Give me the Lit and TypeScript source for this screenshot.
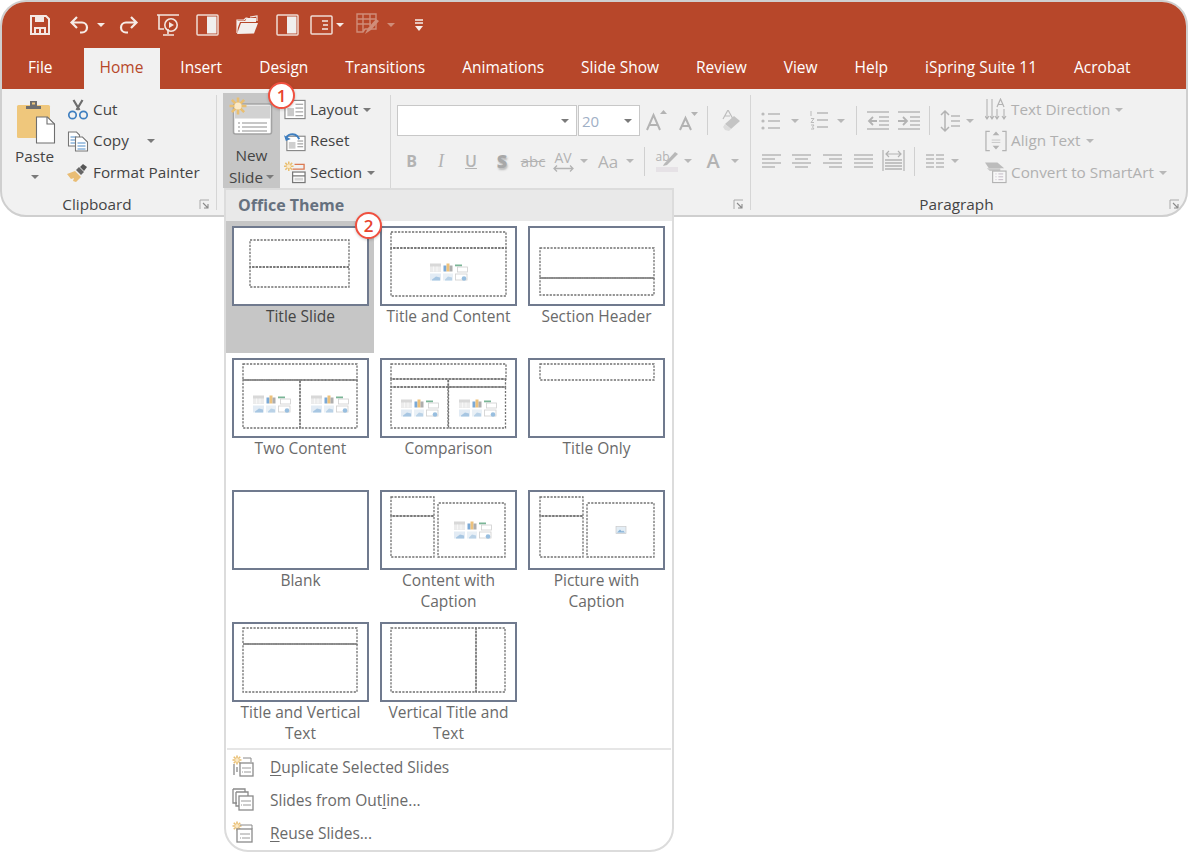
import { LitElement, html, css, svg } from "lit";
import { customElement } from "lit/decorators.js";

const ic = (w: number, h: number, body: unknown) =>
  html`<svg class="ic" width=${w} height=${h} viewBox="0 0 ${w} ${h}" fill="none">${body}</svg>`;

const caret = () => html`<svg class="caret" width="8" height="4" viewBox="0 0 8 4"><path d="M0 0h8L4 4z" fill="currentColor"/></svg>`;

const sun = (cx: number, cy: number, r: number, sw = 1.6) => svg`
  <g stroke="#e9bf72" stroke-width=${sw}>
    <path d="M${cx - r} ${cy}H${cx + r}M${cx} ${cy - r}V${cy + r}M${cx - r * 0.72} ${cy - r * 0.72}L${cx + r * 0.72} ${cy + r * 0.72}M${cx - r * 0.72} ${cy + r * 0.72}L${cx + r * 0.72} ${cy - r * 0.72}"/>
  </g>
  <circle cx=${cx} cy=${cy} r=${r * 0.42} fill="#fbe9c6"/>`;

const I = {
  save: ic(22, 22, svg`<path d="M2 2h15l3 3v15H2z" stroke="#f4e9e4" stroke-width="2"/><path d="M6 2v6h9V2" fill="#f4e9e4"/><path d="M6 20v-6h10v6M11 15v5" stroke="#f4e9e4" stroke-width="2"/>`),
  undo: ic(22, 20, svg`<path d="M8 2L2.500 7.500 8 13M3 7.500h10a5 5 0 0 1 0 10h-2" stroke="#f6ebe6" stroke-width="2.200"/>`),
  redo: ic(22, 20, svg`<path d="M14 2l5.500 5.500L14 13M19 7.500H9a5 5 0 0 0 0 10h2" stroke="#f6ebe6" stroke-width="2.200"/>`),
  present: ic(24, 24, svg`<path d="M1 2h22M3 2v14h5M12 21v-5M7 22h11" stroke="#f4e6e0" stroke-width="1.600"/><circle cx="15" cy="12" r="6.200" stroke="#f4e6e0" stroke-width="1.600"/><path d="M13 9l5 3-5 3z" fill="#f4e6e0"/>`),
  panel: ic(23, 22, svg`<rect x="1" y="1" width="21" height="20" rx="1" stroke="#f0dcd4" stroke-width="1.500"/><rect x="11" y="2.500" width="9.500" height="17" fill="#f0efee"/>`),
  folder: ic(23, 20, svg`<path d="M1 18V5h7l2-2h1v2M14 2l7-1v5" stroke="#f3e8e3" stroke-width="1.200"/><path d="M1 19l4-11h17l-4 10.500z" fill="#f3efed"/><path d="M1 6h8l2-3h9v4H4L1 15z" fill="#f3efed"/>`),
  layoutW: ic(23, 20, svg`<rect x="1" y="1" width="21" height="18" rx="1" stroke="#f0dcd4" stroke-width="1.500"/><path d="M12 6h6M13 10h5M12 14h6" stroke="#f3e8e3" stroke-width="1.300"/>`),
  grid: ic(24, 24, svg`<path d="M1 1h19v15H9l-2 3H1zM1 6h19M1 11h14M7 1v18M14 1v12" stroke="#d08d79" stroke-width="1.400"/><path d="M9 21l3-6 8-9 3 2-8 9z" fill="#d08d79"/>`),
  custom: ic(10, 13, svg`<path d="M1 1h8M1 4h8" stroke="#f7efec" stroke-width="1.400"/><path d="M1 7h8L5 12z" fill="#f7efec"/>`),

  paste: ic(40, 44, svg`
    <rect x="1" y="5" width="33" height="33" rx="1.500" fill="#efc77c"/>
    <path d="M10 6h15v3H10z" fill="#6e6e6e"/><path d="M14 1h7v6h-7z" fill="#6e6e6e"/><rect x="16" y="2.500" width="3" height="2" fill="#efc77c"/>
    <path d="M20.500 17h11l7 7v19h-18z" fill="#fff" stroke="#6e6e6e" stroke-width="1.100"/><path d="M31 17v7h7.500" stroke="#6e6e6e" stroke-width="1.100"/>`),
  cut: ic(21, 21, svg`
    <path d="M6 1l6 10M15 1l-6 10" stroke="#6d6d6d" stroke-width="2.200"/>
    <circle cx="5" cy="16" r="3.700" stroke="#3f7fc0" stroke-width="1.700"/><circle cx="16" cy="16" r="3.700" stroke="#3f7fc0" stroke-width="1.700"/>`),
  copy: ic(21, 21, svg`
    <path d="M1 1h8l3 3v11H1z" fill="#fff" stroke="#777" stroke-width="1.100"/>
    <path d="M3 6h6M3 9h5M3 12h5" stroke="#4f8cc8"/>
    <path d="M8 6h7l5 5v9H8z" fill="#fff" stroke="#777" stroke-width="1.100"/>
    <path d="M10 12h8M10 15h8M10 18h8" stroke="#4f8cc8"/>`),
  painter: ic(22, 20, svg`
    <path d="M0 11l8-3 6 6-5 5-3-1 1-3-3 1z" fill="#e9bd75"/>
    <path d="M9 7l3-3 5 5-3 3z" fill="#666"/><path d="M13 4l3-3 4 3-3 4z" fill="#555"/>`),

  newSlide: ic(46, 42, svg`
    <rect x="4.500" y="10" width="38" height="30" rx="2" fill="#fff" stroke="#a3a3a3" stroke-width="1.600"/>
    <rect x="6" y="11.500" width="35" height="13" fill="#d2d2d2"/>
    <path d="M9 29h2M13 29h25M9 33h2M13 33h25M9 37h2M13 37h25" stroke="#909090" stroke-width="1.100"/>
    ${sun(9, 12, 8.500, 2.600)}`),
  layout: ic(23, 21, svg`
    <rect x="1" y="1" width="21" height="19" fill="#fff" stroke="#888" stroke-width="1.200"/>
    <rect x="3.500" y="9" width="7" height="8.500" fill="#c9c9c9"/>
    <path d="M12 5h8M12 9h8M12 13h8M12 17h8" stroke="#8a8a8a"/>`),
  reset: ic(23, 21, svg`
    <rect x="3" y="5" width="19" height="15" fill="#fff" stroke="#888" stroke-width="1.200"/>
    <rect x="5" y="11" width="7" height="7" fill="#cfcfcf"/><path d="M14 10h6M14 13h6M14 16h6" stroke="#8a8a8a"/>
    <path d="M2 8c1-5 8-7 12-3l2 3" stroke="#3f7fc0" stroke-width="2"/><path d="M0 4l2 6 5-2z" fill="#3f7fc0"/>`),
  section: ic(23, 23, svg`
    ${sun(5, 5, 5)}
    <path d="M11 3h10v5H9" stroke="#dc7a52" stroke-width="1.400"/>
    <rect x="9" y="11" width="13" height="11" fill="#fff" stroke="#777" stroke-width="1.300"/><path d="M9 15h13" stroke="#777" stroke-width="1.300"/><rect x="11" y="17" width="9" height="3" fill="#d6d6d6"/>`),

  growA: ic(22, 22, svg`<path d="M1 20L7.500 5 14 20M3.500 15h8" stroke="#b3b3b3" stroke-width="2"/><path d="M14 4h7l-3.500-4z" fill="#b3b3b3"/>`),
  shrinkA: ic(20, 20, svg`<path d="M1 19L6.500 7 12 19M3 15h7" stroke="#b3b3b3" stroke-width="2"/><path d="M12 1h7l-3.500 4z" fill="#b3b3b3"/>`),
  eraser: ic(21, 22, svg`<path d="M3 9l5-9 5 9M5 6h5" stroke="#bdbdbd" stroke-width="1.200"/><path d="M5 14l9-8 6 5-9 8z" fill="#c4c4c4"/><path d="M5 14l6 5-2 2-4-1-2-3z" fill="#dcdcdc"/>`),
  avArrow: ic(21, 7, svg`<path d="M1 3.500h19M4 .5l-3 3 3 3M17 .5l3 3-3 3" stroke="#b3b3b3" stroke-width="1.300"/>`),
  hlPen: ic(23, 22, svg`<path d="M8 14l11-12 3 2-11 11-4 1z" fill="#b8b8b8"/><rect x="0" y="17" width="22" height="5" fill="#e6e2e6"/>`),

  bullets: ic(20, 20, svg`<circle cx="2" cy="3" r="1.600" fill="#bbb"/><circle cx="2" cy="10" r="1.600" fill="#bbb"/><circle cx="2" cy="17" r="1.600" fill="#bbb"/><path d="M7 3h12M7 10h12M7 17h12" stroke="#b8b8b8" stroke-width="1.300"/>`),
  numbers: ic(20, 21, svg`<path d="M2 1v5M2 8.500h3l-3 4h3M2 15h3l-1.500 2 1.500 2H2" stroke="#bbb"/><path d="M8 3h11M8 10h11M8 17h11" stroke="#b8b8b8" stroke-width="1.300"/>`),
  outdent: ic(23, 19, svg`<path d="M1 1h22M13 6h10M13 10h10M13 14h10M1 18h22" stroke="#b8b8b8" stroke-width="1.300"/><path d="M11 10H3M7 6l-4 4 4 4" stroke="#b3b3b3" stroke-width="1.800"/>`),
  indent: ic(23, 19, svg`<path d="M1 1h22M13 6h10M13 10h10M13 14h10M1 18h22" stroke="#b8b8b8" stroke-width="1.300"/><path d="M1 10h8M6 6l4 4-4 4" stroke="#b3b3b3" stroke-width="1.800"/>`),
  spacing: ic(20, 24, svg`<path d="M5 3v18M1 6l4-4 4 4M1 18l4 4 4-4" stroke="#b3b3b3" stroke-width="1.500"/><path d="M11 7h9M11 12h9M11 17h9" stroke="#b8b8b8" stroke-width="1.300"/>`),
  alignL: ic(20, 15, svg`<path d="M1 1h19M1 5h13M1 9h19M1 13h13" stroke="#b8b8b8" stroke-width="1.300"/>`),
  alignC: ic(20, 15, svg`<path d="M1 1h19M4 5h13M1 9h19M4 13h13" stroke="#b8b8b8" stroke-width="1.300"/>`),
  alignR: ic(20, 15, svg`<path d="M1 1h19M7 5h13M1 9h19M7 13h13" stroke="#b8b8b8" stroke-width="1.300"/>`),
  alignJ: ic(20, 15, svg`<path d="M1 1h19M1 5h19M1 9h19M1 13h19" stroke="#b8b8b8" stroke-width="1.300"/>`),
  dist: ic(23, 22, svg`<path d="M1 0v21M22 0v21" stroke="#b3b3b3" stroke-width="1.200"/><path d="M4 4h15M7 1L4 4l3 3M16 1l3 3-3 3" stroke="#b3b3b3" stroke-width="1.200"/><path d="M3 10h17M3 13h17M3 16h17M3 19h17" stroke="#b3b3b3" stroke-width="1.300"/>`),
  cols: ic(19, 14, svg`<path d="M0 1h8M0 5h8M0 9h8M0 13h8M10 1h8M10 5h8M10 9h8M10 13h8" stroke="#b8b8b8" stroke-width="1.300"/>`),
  textDir: ic(22, 24, svg`<path d="M2 1v19M7 1v19M12 11v9M0 18l2 3 2-3M5 18l2 3 2-3M10 18l2 3 2-3M19 11v10M17 18l2 3 2-3" stroke="#b3b3b3" stroke-width="1.100"/><path d="M12 9l3.500-8L19 9M13.500 6.500h4" stroke="#b3b3b3" stroke-width="1.200"/>`),
  alignText: ic(23, 22, svg`<path d="M5 1H1v20h4M18 1h4v20h-4" stroke="#b3b3b3" stroke-width="1.300"/><path d="M7 10h9M7 12.500h9" stroke="#c6c6c6"/><path d="M8 5l3.500-4L15 5zM8 16l3.500 4 3.500-4z" fill="#b3b3b3"/>`),
  smart: ic(23, 23, svg`<path d="M0 1h13l7 6H4z" fill="#bcbcbc"/><path d="M2 7h14v3H5z" fill="#c8c8c8"/><rect x="8" y="10" width="14" height="12" fill="#f7f7f7" stroke="#b3b3b3" stroke-width="1.200"/><path d="M11 13h1M14 13h5M11 16h1M14 16h5M11 19h1M14 19h5" stroke="#c2b8c4"/>`),
  expander: ic(11, 11, svg`<path d="M1 10V1h9" stroke="#aaa" stroke-width="1"/><path d="M4 4l5 5M9 5v4H5" stroke="#8a8a8a" stroke-width="1.100"/>`),

  dup: ic(22, 23, svg`${sun(5, 5, 4.500)}<path d="M2 9v11M5 12v5" stroke="#8a8a8a" stroke-width="1.300"/><path d="M11 3h8v4" stroke="#8a8a8a"/><rect x="8" y="8" width="13" height="13" fill="#fff" stroke="#8a8a8a" stroke-width="1.300"/><path d="M10 13h9M10 17h1M12 17h7" stroke="#9a9a9a"/>`),
  outline: ic(22, 23, svg`<path d="M1 1h12v3M1 1v14h4" stroke="#8a8a8a" stroke-width="1.300"/><path d="M4 4h12v4M4 4v14h3" stroke="#8a8a8a" stroke-width="1.300"/><rect x="7" y="8" width="14" height="14" fill="#fff" stroke="#8a8a8a" stroke-width="1.300"/><path d="M9 13h10M9 17h1M11 17h8" stroke="#9a9a9a"/>`),
  reuse: ic(22, 23, svg`${sun(5, 5, 4.500)}<path d="M8 4h12v4" stroke="#8a8a8a"/><rect x="5" y="8" width="15" height="13" fill="#fff" stroke="#8a8a8a" stroke-width="1.300"/><path d="M8 13h10M8 17h1M10 17h8" stroke="#9a9a9a"/>`),
};

const contentIcon = (cx: number, cy: number) => svg`
  <g transform="translate(${cx - 19} ${cy - 8.500})" opacity=".8">
    <rect width="11" height="8" fill="#cfcfcf"/><rect y="3" width="11" height="5" fill="#e8e8e8"/><path d="M3.500 3v5M7 3v5" stroke="#fff" stroke-width=".6"/>
    <rect x="13.500" y="2" width="3" height="6" fill="#5b94cc"/><rect x="16.500" y="0" width="3" height="8" fill="#e9b35c"/><rect x="19.500" y="2" width="3" height="6" fill="#9a9a9a"/>
    <rect x="25" y="1" width="7" height="1.800" fill="#5aa37d"/><rect x="27.500" y="3.500" width="10" height="5" fill="#fff" stroke="#c4c4c4" stroke-width=".8"/>
    <rect y="10" width="11" height="7" fill="#dbe7f2"/><path d="M2 16l4-3 4 1v3H2z" fill="#92b9dc"/>
    <rect x="13" y="10" width="10" height="7" fill="#e4edf5"/><path d="M15 16l3-3 4 1v3h-7z" fill="#a9c8e2"/>
    <rect x="25.500" y="10.500" width="11.500" height="6" fill="#fff" stroke="#c4c4c4" stroke-width=".8"/><circle cx="34" cy="15" r="2.300" fill="#7fafd8"/>
  </g>`;

const pictureIcon = (cx: number, cy: number) => svg`
  <g transform="translate(${cx - 5} ${cy - 3.500})"><rect width="10" height="7" fill="#e3edf5" stroke="#c4c4c4" stroke-width=".6"/><path d="M1 6l3-3 2 2 1-1 2 2z" fill="#8ab4d8"/></g>`;

type Layout = { name: string[]; boxes: number[][]; icons?: number[][]; pic?: number[]; sel?: boolean };

const LAYOUTS: Layout[] = [
  { name: ["Title Slide"], sel: true, boxes: [[18, 14, 99, 27], [18, 41, 99, 20]] },
  { name: ["Title and Content"], boxes: [[11, 6, 115, 16], [11, 22, 115, 48]], icons: [[69, 46]] },
  { name: ["Section Header"], boxes: [[12, 22, 114, 30], [12, 52, 114, 17]] },
  { name: ["Two Content"], boxes: [[11, 6, 114, 16], [11, 22, 57, 48], [68, 22, 57, 48]], icons: [[40, 46], [98, 46]] },
  { name: ["Comparison"], boxes: [[11, 6, 115, 15], [11, 21, 57, 8], [68.5, 21, 57, 8], [11, 29, 57, 41], [68.5, 29, 57, 41]], icons: [[40, 50], [98, 50]] },
  { name: ["Title Only"], boxes: [[12, 6, 114, 16]] },
  { name: ["Blank"], boxes: [] },
  { name: ["Content with", "Caption"], boxes: [[11, 7, 43, 19], [11, 26, 43, 41], [58, 13, 67, 54]], icons: [[93, 40]] },
  { name: ["Picture with", "Caption"], boxes: [[12, 7, 43, 19], [12, 26, 43, 41], [59, 13, 67, 54]], pic: [93, 40] },
  { name: ["Title and Vertical", "Text"], boxes: [[11, 6, 114, 16], [11, 22, 114, 48]] },
  { name: ["Vertical Title and", "Text"], boxes: [[11, 6, 85, 64], [96, 6, 29, 64]] },
];

@customElement("app-root")
export class AppRoot extends LitElement {
  static styles = css`
    :host { display: block; position: relative; width: 1188px; height: 853px; background: #fff; overflow: hidden;
      font-family: "Open Sans", "Noto Sans", sans-serif; font-size: 15.300px; color: #444; }
    .ic { display: block; flex: none; }
    .caret { display: block; flex: none; color: #7a7a7a; }
    .window { box-sizing: border-box; width: 1188px; height: 217px; border: 2px solid #cfcfcf; border-radius: 26px; overflow: hidden; background: #f1f1f1; display: flex; flex-direction: column; }
    .qat { height: 46px; background: #b7472a; display: grid; align-items: center; justify-items: center;
      grid-template-columns: 26px 24px 16px 24px 18px 36px 8px 28px 11px 28px 12px 28px 12px 28px 6px 28px 10px 7px 32px 14px 11px 20px; }
    .qat .caret { color: #f6ebe6; }
    .qat .caret.dim { color: #d08d79; }
    .tabs { height: 41px; box-sizing: border-box; padding: 0 0 3px 26px; background: #b7472a; display: flex; align-items: center; gap: 37px; color: #fff; font-size: 15.500px; white-space: nowrap; }
    .tabs span { display: block; }
    .tabs .first { margin-right: 10px; }
    .tabs .active { background: #f1f1f1; color: #b7472a; align-self: stretch; line-height: 38px; height: 41px; margin: 0 -17px 0 -16px; padding: 0 17px 0 16px; }
    .ribbon { flex: 1; display: flex; min-height: 0; }
    .sep { width: 1px; background: #d6d6d6; margin: 6px 0 5px; flex: none; }
    .group { display: flex; flex-direction: column; flex: none; position: relative; }
    .g-clip { width: 214px; } .g-slides { width: 173px; } .g-font { width: 359px; } .g-para { width: 435px; }
    .body { flex: 1; display: flex; min-height: 0; }
    .glabel { height: 22px; display: flex; align-items: center; color: #444; }
    .glabel b { flex: 1; font-weight: 400; text-align: center; }
    .exp { width: 24px; display: flex; justify-content: center; }
    .stack { display: flex; flex-direction: column; margin-top: 5px; }
    .row { height: 31.500px; display: flex; align-items: center; gap: 4px; white-space: nowrap; }
    .row .ic { width: 22px; }
    .row > span { padding-bottom: 2px; }
    .row .caret { margin-left: 1px; }
    .paste { margin-left: 5px; width: 55px; margin-top: 11px; display: flex; flex-direction: column; align-items: center; }
    .paste .t { margin-top: 1px; line-height: 22px; }
    .paste .ic { margin-left: 3px; }
    .paste .caret { margin-top: 8px; }
    .clipcol { margin-left: 5px; }
    .copycaret { margin-left: 13px; padding-bottom: 0 !important; }
    .newslide { margin: 4px 0 0 6px; width: 57px; height: 95px; background: #c6c6c6; display: flex; flex-direction: column; align-items: center; line-height: 22px; padding-top: 1px; box-sizing: border-box; }
    .newslide .t1 { margin-top: 8px; }
    .newslide .t2 { display: flex; align-items: center; gap: 3px; }
    .slidecol { margin-left: 4px; }
    .off { color: #b0b0b0; }
    .off .caret { color: #b8b8b8; }
    .fontcol { margin: 16px 0 0 6px; display: flex; flex-direction: column; }
    .cells { display: grid; align-items: center; justify-items: center; }
    .f1 { height: 31px; grid-template-columns: 180px 63px 34px 30px 6px 40px; }
    .f2 { height: 32px; margin-top: 9px; grid-template-columns: 29px 30px 30px 32px 30px 30px 12px 36px 7px 23px 22px 20px 30px 14px; color: #b3b3b3; }
    .combo { box-sizing: border-box; height: 31px; background: #fff; border: 1.500px solid #c8c8c8; justify-self: stretch; display: flex; align-items: center; justify-content: flex-end; padding-right: 7px; }
    .combo.size { margin-left: 1px; justify-content: space-between; padding-left: 3px; color: #9fb0c6; font-size: 15px; }
    .vsep { width: 1px; height: 29px; background: #d0d0d0; }
    .big { font-size: 20px; font-weight: 600; line-height: 1; }
    .bold { font-weight: 700; font-size: 16px; }
    .it { font-family: "Liberation Serif", serif; font-style: italic; font-size: 18px; }
    .ul { text-decoration: underline; font-weight: 600; font-size: 16px; }
    .sh { font-weight: 800; font-size: 18px; text-shadow: 1px 2px 2px #bbb; color: #a8a8a8; }
    .st { text-decoration: line-through; font-size: 15px; }
    .aa { font-size: 17px; }
    .av { display: flex; flex-direction: column; align-items: center; font-size: 14px; line-height: 15px; }
    .hl { display: flex; flex-direction: column; position: relative; width: 23px; height: 22px; font-size: 12px; line-height: 13px; }
    .hl .ic { position: absolute; left: 0; top: 0; }
    .paracol { margin: 16px 0 0 5px; width: 229px; flex: none; display: flex; flex-direction: column; }
    .p1 { height: 31px; grid-template-columns: 29px 20px 27px 18px 12px 31px 30px 12px 30px 10px; }
    .p2 { height: 32px; margin-top: 9px; grid-template-columns: 30px 30px 32px 29px 32px 10px 32px 8px; }

    .badge { position: absolute; box-sizing: border-box; width: 27px; height: 27px; border-radius: 50%; background: #fff; border: 2px solid #f0503f; color: #e8432e; display: flex; align-items: center; justify-content: center; font-size: 17px; font-weight: 600; box-shadow: 0 1px 3px rgba(0,0,0,.2); z-index: 3; }
    .b1 { left: 268px; top: 82px; }
    .b2 { left: 129px; top: -9px; }

    .menu { position: absolute; left: 224px; top: 188px; box-sizing: border-box; width: 450px; height: 664px; background: #fff; border: 2px solid #dcdcdc; border-radius: 0 0 24px 24px; z-index: 2; }
    .mhead { height: 31px; background: #e9e9e9; color: #66717f; font-weight: 700; font-size: 16px; line-height: 31px; padding-left: 12px; }
    .gallery { position: relative; display: grid; grid-template-columns: repeat(3, 148px); grid-auto-rows: 132px; }
    .cell { padding: 5px 5px 0 6px; box-sizing: border-box; color: #6a6a6a; text-align: center; font-size: 15.500px; line-height: 21px; }
    .cell.sel { background: #c6c6c6; color: #444; }
    .thumb { display: block; box-sizing: border-box; width: 137px; height: 80px; background: #fff; border: 2px solid #707a8e; }
    .cell p { margin: 0; }
    .mitems { margin: -1px 1px 0; border-top: 2px solid #e6e6e6; }
    .mi { height: 33px; display: flex; align-items: center; color: #6a6a6a; padding-left: 5px; gap: 16px; font-size: 15.500px; }
    .mi u { text-underline-offset: 2px; }
  `;

  cellTpl(l: Layout) {
    return html`<div class="cell ${l.sel ? "sel" : ""}">
      <svg class="thumb" viewBox="0 0 133 76" fill="none">
        <g transform="translate(-2 -2)">
          ${l.boxes.map((b, i) => svg`<rect x=${b[0]} y=${b[1]} width=${b[2]} height=${b[3]} stroke="#707070" stroke-width="1.300" stroke-dasharray="2.200 1.300" stroke-dashoffset=${i * 1.4}/>`)}
          ${(l.icons || []).map((c) => contentIcon(c[0], c[1]))}
          ${l.pic ? pictureIcon(l.pic[0], l.pic[1]) : ""}
        </g>
      </svg>
      ${l.name.map((n) => html`<p>${n}</p>`)}
    </div>`;
  }

  render() {
    return html`
      <div class="window">
        <div class="qat">
          <i></i>${I.save}<i></i>${I.undo}${caret()}${I.redo}<i></i>${I.present}<i></i>${I.panel}<i></i>${I.folder}<i></i>${I.panel}<i></i>${I.layoutW}${caret()}<i></i>${I.grid}<svg class="caret dim" width="8" height="4" viewBox="0 0 8 4"><path d="M0 0h8L4 4z" fill="currentColor"/></svg><i></i>${I.custom}
        </div>
        <div class="tabs">
          <span class="first">File</span><span class="active">Home</span><span>Insert</span><span>Design</span><span>Transitions</span><span>Animations</span><span>Slide Show</span><span>Review</span><span>View</span><span>Help</span><span>iSpring Suite 11</span><span>Acrobat</span>
        </div>
        <div class="ribbon">
          <div class="group g-clip">
            <div class="body">
              <div class="paste">${I.paste}<div class="t">Paste</div>${caret()}</div>
              <div class="stack clipcol">
                <div class="row">${I.cut}<span>Cut</span></div>
                <div class="row">${I.copy}<span>Copy</span><span class="copycaret">${caret()}</span></div>
                <div class="row">${I.painter}<span>Format Painter</span></div>
              </div>
            </div>
            <div class="glabel"><b>Clipboard</b><span class="exp">${I.expander}</span></div>
          </div>
          <div class="sep"></div>
          <div class="group g-slides">
            <div class="body">
              <div class="newslide">${I.newSlide}<div class="t1">New</div><div class="t2">Slide ${caret()}</div></div>
              <div class="stack slidecol">
                <div class="row">${I.layout}<span>Layout</span>${caret()}</div>
                <div class="row">${I.reset}<span>Reset</span></div>
                <div class="row">${I.section}<span>Section</span>${caret()}</div>
              </div>
            </div>
          </div>
          <div class="sep"></div>
          <div class="group g-font">
            <div class="body">
              <div class="fontcol">
                <div class="cells f1">
                  <div class="combo">${caret()}</div>
                  <div class="combo size"><span>20</span>${caret()}</div>
                  ${I.growA}${I.shrinkA}<i class="vsep"></i>${I.eraser}
                </div>
                <div class="cells f2 off">
                  <span class="bold">B</span><span class="it">I</span><span class="ul">U</span><span class="sh">S</span><span class="st">abc</span>
                  <span class="av"><span>AV</span>${I.avArrow}</span>${caret()}<span class="aa">Aa</span>${caret()}<i class="vsep"></i><span class="hl"><span>ab</span>${I.hlPen}</span>${caret()}<span class="big">A</span>${caret()}
                </div>
              </div>
            </div>
            <div class="glabel"><b></b><span class="exp">${I.expander}</span></div>
          </div>
          <div class="sep"></div>
          <div class="group g-para">
            <div class="body">
              <div class="paracol">
                <div class="cells p1 off">
                  ${I.bullets}${caret()}${I.numbers}${caret()}<i class="vsep"></i>${I.outdent}${I.indent}<i class="vsep"></i>${I.spacing}${caret()}
                </div>
                <div class="cells p2 off">
                  ${I.alignL}${I.alignC}${I.alignR}${I.alignJ}${I.dist}<i class="vsep"></i>${I.cols}${caret()}
                </div>
              </div>
              <div class="stack off">
                <div class="row">${I.textDir}<span>Text Direction</span>${caret()}</div>
                <div class="row">${I.alignText}<span>Align Text</span>${caret()}</div>
                <div class="row">${I.smart}<span>Convert to SmartArt</span>${caret()}</div>
              </div>
            </div>
            <div class="glabel"><b>Paragraph</b><span class="exp">${I.expander}</span></div>
          </div>
        </div>
      </div>
      <div class="badge b1">1</div>
      <div class="menu">
        <div class="mhead">Office Theme</div>
        <div class="gallery">
          ${LAYOUTS.map((l) => this.cellTpl(l))}
          <div class="badge b2">2</div>
        </div>
        <div class="mitems">
          <div class="mi">${I.dup}<span><u>D</u>uplicate Selected Slides</span></div>
          <div class="mi">${I.outline}<span>Slides from Out<u>l</u>ine...</span></div>
          <div class="mi">${I.reuse}<span><u>R</u>euse Slides...</span></div>
        </div>
      </div>
    `;
  }
}
